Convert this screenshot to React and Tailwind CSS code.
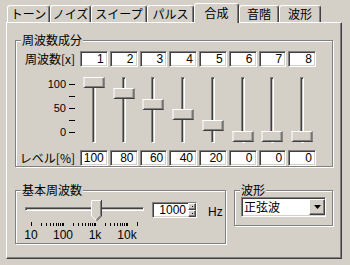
import React from "react";

const tabs = [
  { label: "トーン", w: "w-[43px]" },
  { label: "ノイズ", w: "w-[41px]" },
  { label: "スイープ", w: "w-[56px]" },
  { label: "パルス", w: "w-[47px]" },
  { label: "合成", w: "w-[45px]", sel: true },
  { label: "音階", w: "w-[40px]" },
  { label: "波形", w: "w-[42px]" },
];

const freqs = [1, 2, 3, 4, 5, 6, 7, 8];
const levels = [100, 80, 60, 40, 20, 0, 0, 0];

const SUNKEN =
  "border border-t-[#808080] border-l-[#808080] border-b-white border-r-white shadow-[inset_1px_1px_0_#404040,inset_-1px_-1px_0_#d4d0c8] bg-white";
const RAISED =
  "border border-t-white border-l-white border-r-[#404040] border-b-[#404040] shadow-[inset_-1px_-1px_0_#808080] bg-[#d4d0c8]";
const NUM = "font-['Liberation_Sans',sans-serif]";

function Group({ title, className, children }) {
  return (
    <div
      className={
        "relative border border-[#808080] shadow-[inset_1px_1px_0_#fff,1px_1px_0_#fff] " +
        className
      }
    >
      <span className="absolute left-[5px] top-[-8px] px-[1px] bg-[#d4d0c8] leading-[14px]">
        {title}
      </span>
      {children}
    </div>
  );
}

function NumBox({ v }) {
  return (
    <div
      className={
        SUNKEN +
        " flex-1 h-[16px] flex items-center justify-end pr-[3px] text-[12px] leading-none " +
        NUM
      }
    >
      {v}
    </div>
  );
}

function VSlider({ v }) {
  return (
    <div className="flex-1 relative h-[66px]">
      <div className="absolute left-1/2 -translate-x-1/2 top-0 bottom-0 w-[4px] border border-l-[#808080] border-t-[#808080] border-r-white border-b-white shadow-[inset_1px_1px_0_#404040] bg-[#d4d0c8]" />
      <div
        className={RAISED + " absolute left-1/2 -translate-x-1/2 w-[21px] h-[11px]"}
        style={{ top: Math.round((100 - v) * 0.54) + "px" }}
      />
    </div>
  );
}

function Ticks() {
  const vals = [];
  for (const d of [10, 100, 1000, 10000]) {
    for (let k = 1; k <= 9; k++) {
      const v = k * d;
      if (v <= 20000) vals.push(v);
    }
  }
  return (
    <svg width="119" height="5" className="block">
      {vals.map((v, i) => {
        const x = Math.round(6 + 32 * Math.log10(v / 10));
        const long = i === 0 || i === vals.length - 1;
        return (
          <rect
            key={v}
            x={x}
            y={long ? 0 : 1}
            width="1"
            height={long ? 4 : 3}
            fill="#000"
          />
        );
      })}
    </svg>
  );
}

export default function App() {
  return (
    <div className="w-[350px] h-[265px] bg-[#d4d0c8] overflow-hidden font-['Noto_Sans_CJK_JP',sans-serif] text-[12px] text-black">
      {/* tabs */}
      <div className="h-[22px] flex items-end pl-[7px]">
        {tabs.map((t) =>
          t.sel ? (
            <div
              key={t.label}
              className={
                t.w +
                " relative z-10 h-[20px] mb-[-1px] bg-[#d4d0c8] border-l border-t border-r border-l-white border-t-white border-r-[#404040] shadow-[inset_-1px_0_0_#808080] rounded-t-[3px] flex items-center justify-center pb-[1px] leading-none"
              }
            >
              {t.label}
            </div>
          ) : (
            <div
              key={t.label}
              className={
                t.w +
                " h-[17px] bg-[#d4d0c8] border-l border-t border-r border-l-white border-t-white border-r-[#404040] shadow-[inset_-1px_0_0_#808080] rounded-t-[3px] flex items-center justify-center leading-none"
              }
            >
              {t.label}
            </div>
          )
        )}
      </div>

      {/* panel */}
      <div className="ml-[6px] w-[336px] h-[237px] border border-l-white border-t-white border-r-[#404040] border-b-[#404040] shadow-[inset_-1px_-1px_0_#808080]">
        <Group title="周波数成分" className="ml-[8px] mt-[17px] w-[318px] h-[127px]">
          <div className="flex items-center mt-[10px]">
            <div className="w-[59px] text-right leading-[16px]">周波数[x]</div>
            <div className="ml-[5px] w-[236px] flex gap-[2px]">
              {freqs.map((f) => (
                <NumBox key={f} v={f} />
              ))}
            </div>
          </div>

          <div className="flex mt-[10px] h-[66px]">
            <div className={"w-[59px] flex flex-col pt-[1px] text-[11px] " + NUM}>
              {["100", "", "50", "", "0"].map((l, i) => (
                <div key={i} className="h-[12px] flex items-center justify-end leading-none">
                  <span>{l}</span>
                  <div className="ml-[3px] w-[6px] h-[1px] bg-black" />
                </div>
              ))}
            </div>
            <div className="ml-[5px] w-[236px] flex gap-[2px]">
              {levels.map((v, i) => (
                <VSlider key={i} v={v} />
              ))}
            </div>
          </div>

          <div className="flex items-center mt-[7px]">
            <div className="w-[59px] text-right leading-[16px]">レベル[%]</div>
            <div className="ml-[5px] w-[236px] flex gap-[2px]">
              {levels.map((v, i) => (
                <NumBox key={i} v={v} />
              ))}
            </div>
          </div>
        </Group>

        <div className="flex items-start ml-[8px] mt-[23px]">
          <Group title="基本周波数" className="w-[211px] h-[54px]">
            <div className="flex items-start">
              <div className="ml-[9px] mt-[9px] w-[119px]">
                <div className="relative h-[21px]">
                  <div className="absolute left-0 right-0 top-[7px] h-[4px] border border-l-[#808080] border-t-[#808080] border-r-white border-b-white shadow-[inset_1px_1px_0_#404040] bg-[#d4d0c8]" />
                  <svg width="11" height="21" className="absolute left-[66px] top-0">
                    <polygon points="0,0 11,0 11,16 5.5,21 0,16" fill="#d4d0c8" />
                    <polyline points="0.5,16 0.5,0.5 10,0.5" fill="none" stroke="#fff" />
                    <polyline points="0.5,16 5.5,20.5" fill="none" stroke="#fff" />
                    <polyline points="10.5,0 10.5,16 5.5,21" fill="none" stroke="#404040" />
                    <polyline points="9.5,1 9.5,15.5 5.5,19.5" fill="none" stroke="#808080" />
                  </svg>
                </div>
                <div className="mt-[1px]">
                  <Ticks />
                </div>
                <div className={"flex ml-[-10px] mt-[1px] leading-[14px] " + NUM}>
                  <span className="w-[32px] text-center">10</span>
                  <span className="w-[32px] text-center">100</span>
                  <span className="w-[32px] text-center">1k</span>
                  <span className="w-[32px] text-center">10k</span>
                </div>
              </div>
              <div className={SUNKEN + " ml-[8px] mt-[11px] w-[45px] h-[16px] flex items-stretch"}>
                <div className={"flex-1 flex items-center justify-end pr-[2px] leading-none " + NUM}>
                  1000
                </div>
                <div className="w-[8px] flex flex-col">
                  <div className={RAISED + " flex-1 flex items-center justify-center"}>
                    <div className="w-[1px] h-[1px] bg-black" />
                  </div>
                  <div className={RAISED + " flex-1 flex items-center justify-center"}>
                    <div className="w-[1px] h-[1px] bg-black" />
                  </div>
                </div>
              </div>
              <div className={"ml-[11px] mt-[15px] leading-none " + NUM}>Hz</div>
            </div>
          </Group>

          <Group title="波形" className="ml-[8px] w-[99px] h-[36px]">
            <div className={SUNKEN + " ml-[6px] mt-[6px] w-[85px] h-[20px] flex items-center"}>
              <div className="flex-1 pl-[2px] leading-none">正弦波</div>
              <div className={RAISED + " w-[16px] h-[16px] flex items-center justify-center"}>
                <svg width="7" height="4">
                  <polygon points="0,0 7,0 3.5,4" fill="#000" />
                </svg>
              </div>
            </div>
          </Group>
        </div>
      </div>
    </div>
  );
}
